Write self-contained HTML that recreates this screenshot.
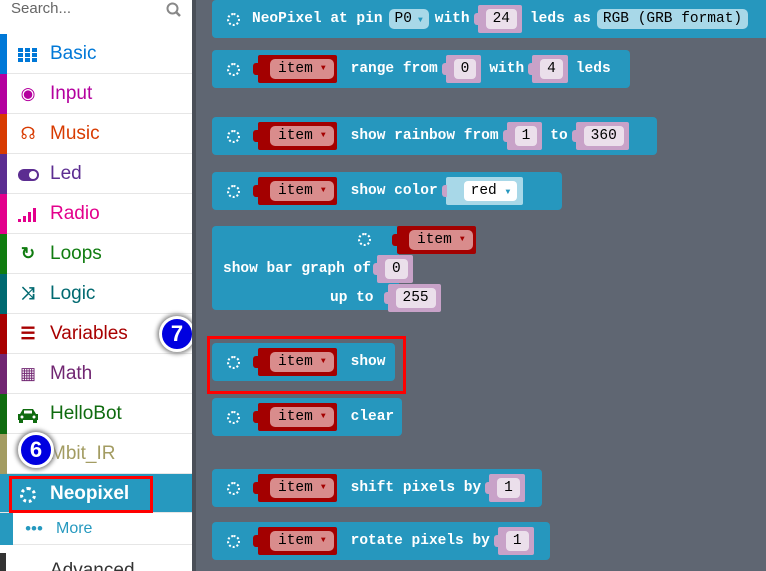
<!DOCTYPE html>
<html><head><meta charset="utf-8"><style>
*{box-sizing:border-box;margin:0;padding:0}
html,body{width:766px;height:571px;overflow:hidden}
body{background:#5f6672;font-family:"Liberation Sans",sans-serif;position:relative}
#side{position:absolute;left:0;top:0;width:195px;height:571px;background:#fff;overflow:hidden}
.search{position:absolute;left:11px;top:0;font-size:15px;color:#666;line-height:18px}
.row{position:absolute;left:0;width:195px;height:40px;border-bottom:1px solid #e6e6e6;font-size:19px;line-height:40px}
.row .bar{position:absolute;left:0;top:0;width:7px;height:40px}
.row .ic{position:absolute;left:17px;top:0;width:22px;text-align:center;font-size:17px}
.row .t{position:absolute;left:50px;top:0}
#ws{position:absolute;left:195px;top:0;width:571px;height:571px}
.blk{position:absolute;background:#2697be;border-radius:4px;height:38px;display:flex;align-items:center;color:#fff;font:bold 14.5px "Liberation Mono",monospace;white-space:pre}
.sp{width:13px;height:13px;border-radius:50%;border:2px dotted #fff;margin:0 18px 0 15px;flex:none}
.item{background:#a30000;height:28px;display:flex;align-items:center;padding:0 3px 0 12px;border-radius:2px;position:relative;margin-right:14px}
.item:before{content:"";position:absolute;left:-5px;top:8px;width:6px;height:12px;background:#a30000;border-radius:3px 0 0 3px}
.pill{background:#d98c8c;color:#000;font-weight:normal;border-radius:5px;height:20px;line-height:20px;padding:0 8px;font-size:14.5px;display:flex;align-items:center}
.pill small{font-size:8px;margin-left:8px;color:#a30000}
.num{background:#c8a2c8;height:28px;display:flex;align-items:center;padding:0 5px 0 8px;position:relative;margin:0 8px 0 8px;border-radius:2px}
.num:before{content:"";position:absolute;left:-4px;top:8px;width:5px;height:12px;background:#c8a2c8;border-radius:3px 0 0 3px}
.num span{background:#ebdfeb;color:#000;font-weight:normal;border-radius:4px;height:20px;line-height:20px;padding:0 7px}
.dd{background:#a8d8e8;color:#000;font-weight:normal;border-radius:5px;height:20px;line-height:20px;padding:0 6px;margin:0 6px}
.dd small{font-size:8px;margin-left:6px;color:#2697be}
.badge{position:absolute;width:36px;height:36px;border-radius:50%;background:#0000e0;border:3px solid #fff;box-shadow:0 0 4px 2px #888;color:#fff;font:bold 22px "Liberation Sans",sans-serif;text-align:center;line-height:30px}
</style></head><body>
<div id="side">
<div class="search">Search...</div>
<svg style="position:absolute;left:166px;top:2px" width="16" height="16"><circle cx="6.5" cy="6.5" r="5" fill="none" stroke="#888" stroke-width="2"/><line x1="10" y1="10" x2="14" y2="14" stroke="#888" stroke-width="2.5"/></svg>
<div class="row" style="top:34px;color:#0078d7"><div class="bar" style="background:#0078d7"></div><div class="ic"><svg width="20" height="16" style="vertical-align:middle"><g fill="#0078d7"><rect x="0" y="1" width="5" height="4"/><rect x="7" y="1" width="5" height="4"/><rect x="14" y="1" width="5" height="4"/><rect x="0" y="6" width="5" height="4"/><rect x="7" y="6" width="5" height="4"/><rect x="14" y="6" width="5" height="4"/><rect x="0" y="11" width="5" height="4"/><rect x="7" y="11" width="5" height="4"/><rect x="14" y="11" width="5" height="4"/></g></svg></div><div class="t">Basic</div></div>
<div class="row" style="top:74px;color:#b4009e"><div class="bar" style="background:#b4009e"></div><div class="ic">◉</div><div class="t">Input</div></div>
<div class="row" style="top:114px;color:#d83b01"><div class="bar" style="background:#d83b01"></div><div class="ic">☊</div><div class="t">Music</div></div>
<div class="row" style="top:154px;color:#5c2d91"><div class="bar" style="background:#5c2d91"></div><div class="ic"><span style="display:inline-block;width:21px;height:12px;border-radius:6px;background:#5c2d91;position:relative;vertical-align:middle"><span style="position:absolute;right:2px;top:2px;width:8px;height:8px;border-radius:50%;background:#fff"></span></span></div><div class="t">Led</div></div>
<div class="row" style="top:194px;color:#e3008c"><div class="bar" style="background:#e3008c"></div><div class="ic"><svg width="20" height="16" style="vertical-align:middle"><g fill="#e3008c"><rect x="0" y="12" width="3" height="3"/><rect x="5" y="9" width="3" height="6"/><rect x="10" y="5" width="3" height="10"/><rect x="15" y="1" width="3" height="14"/></g></svg></div><div class="t">Radio</div></div>
<div class="row" style="top:234px;color:#107c10"><div class="bar" style="background:#107c10"></div><div class="ic" style="font-weight:bold">↻</div><div class="t">Loops</div></div>
<div class="row" style="top:274px;color:#006970"><div class="bar" style="background:#006970"></div><div class="ic" style="font-weight:bold">⤨</div><div class="t">Logic</div></div>
<div class="row" style="top:314px;color:#a80000"><div class="bar" style="background:#a80000"></div><div class="ic" style="font-weight:bold">☰</div><div class="t">Variables</div></div>
<div class="row" style="top:354px;color:#712672"><div class="bar" style="background:#712672"></div><div class="ic">▦</div><div class="t">Math</div></div>
<div class="row" style="top:394px;color:#0f6b0f"><div class="bar" style="background:#0f6b0f"></div><div class="ic"><svg width="22" height="16" style="vertical-align:middle"><path d="M3 7 L6 2 H16 L19 7 H21 V13 H1 V7Z" fill="#0f6b0f"/><rect x="7" y="3.5" width="8" height="3" fill="#fff"/><circle cx="5" cy="10" r="1.5" fill="#fff"/><circle cx="17" cy="10" r="1.5" fill="#fff"/><rect x="2" y="13" width="4" height="3" fill="#0f6b0f"/><rect x="16" y="13" width="4" height="3" fill="#0f6b0f"/></svg></div><div class="t">HelloBot</div></div>
<div class="row" style="top:434px;color:#a39c62"><div class="bar" style="background:#a39c62"></div><div class="t">Mbit_IR</div></div>
<div class="row" style="top:474px;height:39px;background:#2699bf;color:#fff;font-weight:bold"><div class="ic"><span style="display:inline-block;width:16px;height:16px;border-radius:50%;border:3px dotted #fff;vertical-align:middle"></span></div><div class="t">Neopixel</div></div>
<div style="position:absolute;left:9px;top:476px;width:144px;height:37px;border:3px solid #f00"></div>
<div style="position:absolute;left:0;top:513px;width:13px;height:32px;background:#2699bf"></div>
<div class="row" style="top:513px;height:32px;line-height:32px;font-size:16px;color:#2699bf;left:13px;width:182px"><div class="ic" style="left:10px">•••</div><div class="t" style="left:43px">More</div></div>
<div style="position:absolute;left:0;top:553px;width:6px;height:18px;background:#333"></div>
<div style="position:absolute;left:50px;top:560px;font-size:19px;color:#333">Advanced</div>
<div class="badge" style="left:18px;top:432px">6</div>
<div class="badge" style="left:159px;top:316px">7</div>
</div>
<div style="position:absolute;left:192px;top:0;width:4px;height:571px;background:#4a4f58"></div>
<div id="ws">
<div class="blk" style="left:17px;top:0;width:560px;height:38px"><div class="sp" style="margin-right:12px"></div>NeoPixel at pin<div class="dd">P0<small>▼</small></div>with<div class="num"><span>24</span></div>leds as<div class="dd">RGB (GRB format)</div></div>
<div class="blk" style="left:17px;top:50px;width:418px"><div class="sp"></div><div class="item"><div class="pill">item<small>▼</small></div></div>range from<div class="num"><span>0</span></div>with<div class="num"><span>4</span></div>leds</div>
<div class="blk" style="left:17px;top:117px;width:445px"><div class="sp"></div><div class="item"><div class="pill">item<small>▼</small></div></div>show rainbow from<div class="num"><span>1</span></div>to<div class="num"><span>360</span></div></div>
<div class="blk" style="left:17px;top:172px;width:350px"><div class="sp"></div><div class="item"><div class="pill">item<small>▼</small></div></div>show color<div class="num" style="background:#a8d8e8;padding:0 6px"><span style="background:#fff;margin-left:12px">red <small style="font-size:8px;color:#2697be">▼</small></span></div></div>
<div class="blk" style="left:17px;top:226px;width:187px;height:84px"></div>
<div style="position:absolute;left:163px;top:233px;width:13px;height:13px;border-radius:50%;border:2px dotted #fff"></div>
<div class="blk" style="left:202px;top:226px;background:none;height:28px"><div class="item"><div class="pill">item<small>▼</small></div></div></div>
<div class="blk" style="left:28px;top:256px;background:none;height:26px">show bar graph of<div class="num" style="margin-left:6px"><span>0</span></div></div>
<div class="blk" style="left:135px;top:284px;background:none;height:28px">up to<div class="num" style="margin-left:14px"><span>255</span></div></div>
<div class="blk" style="left:17px;top:343px;width:183px"><div class="sp"></div><div class="item"><div class="pill">item<small>▼</small></div></div>show</div>
<div style="position:absolute;left:12px;top:336px;width:199px;height:58px;border:3px solid #f00"></div>
<div class="blk" style="left:17px;top:398px;width:190px"><div class="sp"></div><div class="item"><div class="pill">item<small>▼</small></div></div>clear</div>
<div class="blk" style="left:17px;top:469px;width:330px"><div class="sp"></div><div class="item"><div class="pill">item<small>▼</small></div></div>shift pixels by<div class="num"><span>1</span></div></div>
<div class="blk" style="left:17px;top:522px;width:338px"><div class="sp"></div><div class="item"><div class="pill">item<small>▼</small></div></div>rotate pixels by<div class="num"><span>1</span></div></div>
</div>
</body></html>
